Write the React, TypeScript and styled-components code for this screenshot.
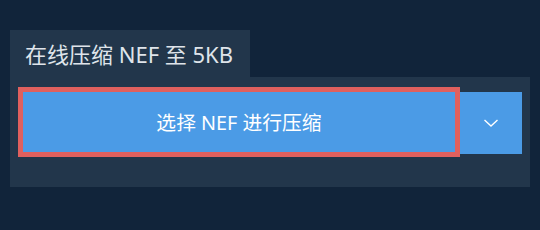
import React from "react";
import styled, { createGlobalStyle } from "styled-components";

const Global = createGlobalStyle`
  html, body { margin: 0; padding: 0; background: #11243a; }
  body { font-family: "Noto Sans", "Noto Sans CJK SC", sans-serif; }
`;

const Page = styled.div`
  width: 540px;
  height: 230px;
  padding: 30px 10px 0 10px;
  box-sizing: border-box;
`;

const Tab = styled.div`
  width: 240px;
  height: 47px;
  background: #22364b;
  color: #dfe4ea;
  font-size: 22px;
  box-sizing: border-box;
  padding-left: 15px;
  padding-bottom: 2px;
  display: flex;
  align-items: center;
`;

const Panel = styled.div`
  width: 520px;
  height: 110px;
  background: #22364b;
  box-sizing: border-box;
  padding: 10px 8px 0 8px;
  display: flex;
  align-items: flex-start;
`;

const MainButton = styled.button`
  width: 442px;
  height: 70px;
  border: 5px solid #e0605e;
  background: #4b9be6;
  color: #ffffff;
  font-family: "Noto Sans", "Noto Sans CJK SC", sans-serif;
  font-size: 19.8px;
  box-sizing: border-box;
  padding: 0 0 2px 0;
  display: flex;
  align-items: center;
  justify-content: center;
  cursor: pointer;
`;

const DropButton = styled.button`
  width: 62px;
  height: 62px;
  margin-top: 5px;
  border: none;
  background: #4b9be6;
  box-sizing: border-box;
  padding: 0;
  display: flex;
  align-items: center;
  justify-content: center;
  cursor: pointer;
`;

export default function App() {
  return (
    <>
      <Global />
      <Page>
        <Tab>在线压缩 NEF 至 5KB</Tab>
        <Panel>
          <MainButton>选择 NEF 进行压缩</MainButton>
          <DropButton>
            <svg width="16" height="10" viewBox="0 0 16 10">
              <path d="M1.5 2 L8 8 L14.5 2" fill="none" stroke="#ffffff" strokeWidth="1.4" />
            </svg>
          </DropButton>
        </Panel>
      </Page>
    </>
  );
}
